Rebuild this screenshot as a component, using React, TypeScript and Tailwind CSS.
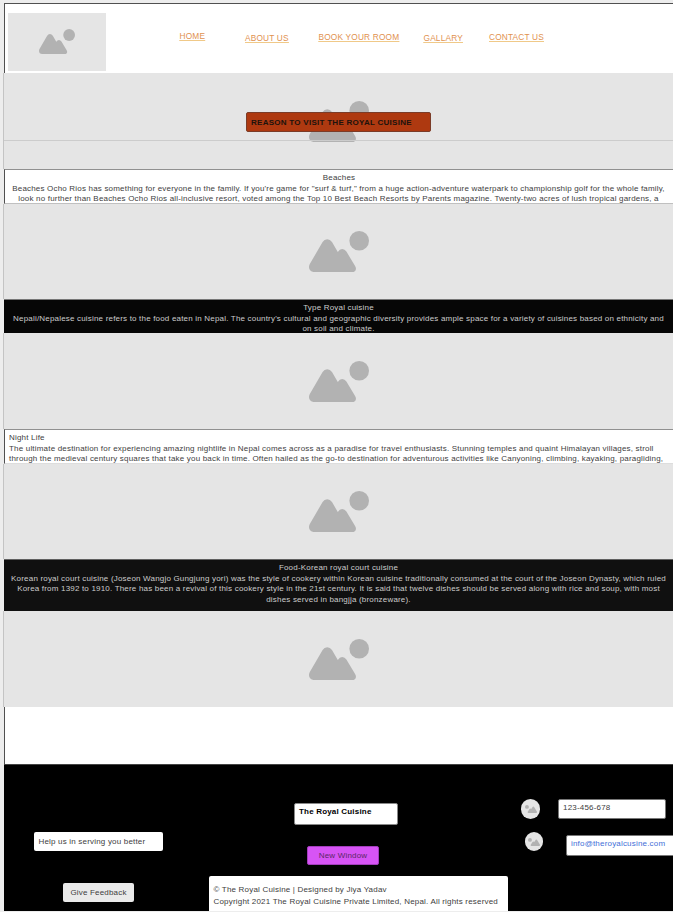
import React from "react";

function Mountains({ className }: { className: string }) {
  return (
    <svg viewBox="0 0 60 41" preserveAspectRatio="none" className={className} fill="#b2b2b2" aria-hidden="true">
      <circle cx="50.2" cy="9.8" r="9.8" />
      <path d="M13.6 11Q15.2 8.2 18.2 8.2Q21.2 8.2 23 11L28.8 21Q30.6 18 33.2 18Q35.8 18 37.4 20.6L46.1 34.9C48.2 38.4 46.2 41 43 41H5.4C.8 41-1.2 36.8.8 33Z" />
    </svg>
  );
}

function Picture({ className }: { className: string }) {
  return (
    <div className={`shrink-0 border-l border-[#c4c4c4] -ml-px bg-[#e5e5e5] pl-[305px] ${className}`}>
      <Mountains className="h-[41px] w-[60px]" />
    </div>
  );
}

function Line({ className = "", children }: { className?: string; children: React.ReactNode }) {
  return <p className={`h-[10.5px] whitespace-nowrap ${className}`}>{children}</p>;
}

export default function App() {
  return (
    <div className="h-[912px] w-[673px] overflow-hidden bg-[#ededed] pl-[4px] pt-[3px] text-[8px] leading-[10.5px] tracking-[0.188px] text-[#404040] [font-family:'Liberation_Sans',Arial,sans-serif]">
      <div className="flex h-[908px] w-[669px] flex-col bg-white">
        <header className="flex h-[70px] shrink-0 border-l border-t border-[#505050] pl-[3px] pt-[9px]">
          <div className="h-[58px] w-[98px] bg-[#e5e5e5] pl-[31px] pt-4">
            <Mountains className="h-[25px] w-[36px]" />
          </div>
          <nav className="flex text-[8.3px] leading-[10px] tracking-[0.18px] text-[#df914f] underline decoration-[#f0c988]">
            <a className="ml-[73.5px] mt-[18px] w-[65.5px]">HOME</a>
            <a className="mt-5 w-[73.5px]">ABOUT US</a>
            <a className="mt-[19px] w-[105px] whitespace-nowrap">BOOK YOUR ROOM</a>
            <a className="mt-5 w-[65.5px]">GALLARY</a>
            <a className="mt-[19px] whitespace-nowrap">CONTACT US</a>
          </nav>
        </header>

        <section className="relative shrink-0">
          <Picture className="h-[96px] pt-7" />
          <div className="absolute left-0 top-[67px] h-px w-full bg-[#cccccc]" />
          <h1 className="absolute left-[241.5px] top-[38.5px] h-[20.5px] w-[185.5px] whitespace-nowrap rounded-[2px] border border-[#7b3c28] bg-[#ae3910] pl-[4.5px] text-[8px] font-bold leading-[19.5px] tracking-[0.27px] text-[#20130d]">
            REASON TO VISIT THE ROYAL CUISINE
          </h1>
        </section>

        <section className="h-[35px] shrink-0 overflow-hidden border-b border-l border-t border-b-[#c0c0c0] border-l-[#505050] border-t-[#909090] bg-white pt-[3px] text-center">
          <Line>Beaches</Line>
          <Line className="-ml-px">Beaches Ocho Rios has something for everyone in the family. If you're game for "surf &amp; turf," from a huge action-adventure waterpark to championship golf for the whole family,</Line>
          <Line className="-ml-px">look no further than Beaches Ocho Rios all-inclusive resort, voted among the Top 10 Best Beach Resorts by Parents magazine. Twenty-two acres of lush tropical gardens, a</Line>
        </section>
        <Picture className="h-[95px] pt-[27px]" />

        <section className="h-[34px] shrink-0 overflow-hidden border-t border-[#777777] bg-[#060606] pt-[3px] text-center text-[#cccccc]">
          <Line>Type Royal cuisine</Line>
          <Line>Nepali/Nepalese cuisine refers to the food eaten in Nepal. The country's cultural and geographic diversity provides ample space for a variety of cuisines based on ethnicity and</Line>
          <Line>on soil and climate.</Line>
        </section>
        <Picture className="h-[96px] pt-7" />

        <section className="h-[35px] shrink-0 overflow-hidden border-b border-l border-t border-b-[#dddddd] border-l-[#505050] border-t-[#909090] bg-white pl-1 pt-[3px]">
          <Line>Night Life</Line>
          <Line>The ultimate destination for experiencing amazing nightlife in Nepal comes across as a paradise for travel enthusiasts. Stunning temples and quaint Himalayan villages, stroll</Line>
          <Line>through the medieval century squares that take you back in time. Often hailed as the go-to destination for adventurous activities like Canyoning, climbing, kayaking, paragliding,</Line>
        </section>
        <Picture className="h-[95px] pt-[27px]" />

        <section className="h-[52px] shrink-0 overflow-hidden border-t border-[#606060] bg-[#101010] pt-[3px] text-center text-[#cccccc]">
          <Line>Food-Korean royal court cuisine</Line>
          <Line>Korean royal court cuisine (Joseon Wangjo Gungjung yori) was the style of cookery within Korean cuisine traditionally consumed at the court of the Joseon Dynasty, which ruled</Line>
          <Line>Korea from 1392 to 1910. There has been a revival of this cookery style in the 21st century. It is said that twelve dishes should be served along with rice and soup, with most</Line>
          <Line>dishes served in bangjja (bronzeware).</Line>
        </section>
        <Picture className="h-[96px] pt-7" />

        <div className="h-[57px] shrink-0 border-l border-[#505050] bg-white" />

        <footer className="flex h-[147px] shrink-0 overflow-hidden border-t border-[#444444] bg-black">
          <div className="w-[205px] shrink-0 pt-[67px]">
            <p className="ml-[30px] h-[19px] w-[129px] rounded-[2px] bg-white pl-[4.5px] leading-[19px]">Help us in serving you better</p>
            <button className="ml-[59px] mt-[32px] block h-[19px] w-[71px] rounded-[2px] bg-[#eaeaea] text-center leading-[19px] tracking-[0.188px]">Give Feedback</button>
          </div>
          <div className="w-[299px] shrink-0 pt-[38px]">
            <p className="ml-[85px] h-[22px] w-[104px] rounded-[2px] border border-[#888888] bg-white pl-1 font-bold leading-[15px] text-black">The Royal Cuisine</p>
            <button className="ml-[98px] mt-[21px] block h-[19px] w-[72px] rounded-[2px] border border-[#a33dbd] bg-[#d754f5] text-center leading-[18px] tracking-[0.188px] text-[#5b2866]">New Window</button>
            <div className="mt-[11px] h-[40px] rounded-t-[2px] bg-white pl-[4.5px] pt-[7.5px] leading-[12px]">
              <p className="whitespace-nowrap">© The Royal Cuisine | Designed by Jiya Yadav</p>
              <p className="whitespace-nowrap">Copyright 2021 The Royal Cuisine Private Limited, Nepal. All rights reserved</p>
            </div>
          </div>
          <div className="w-[165px] shrink-0 pt-[34px]">
            <div className="flex">
              <span className="ml-[13px] flex h-5 w-[19px] shrink-0 items-center justify-center rounded-full bg-[#e5e5e5]"><Mountains className="h-[8px] w-[12px] -scale-x-100" /></span>
              <p className="ml-[18px] h-[20px] w-[108px] shrink-0 rounded-[2px] border border-[#777777] bg-white pl-1 leading-[16px]">123-456-678</p>
            </div>
            <div className="mt-[13px] flex">
              <span className="ml-[17px] flex h-[19px] w-[18px] shrink-0 items-center justify-center rounded-full bg-[#e5e5e5]"><Mountains className="h-[8px] w-[12px] -scale-x-100" /></span>
              <p className="ml-[23px] mt-[3px] h-[21px] w-[109px] shrink-0 rounded-l-[2px] border border-[#777777] bg-white pl-1 leading-[16px] text-[#3f6fd8]">info@theroyalcusine.com</p>
            </div>
          </div>
        </footer>
      </div>
    </div>
  );
}
